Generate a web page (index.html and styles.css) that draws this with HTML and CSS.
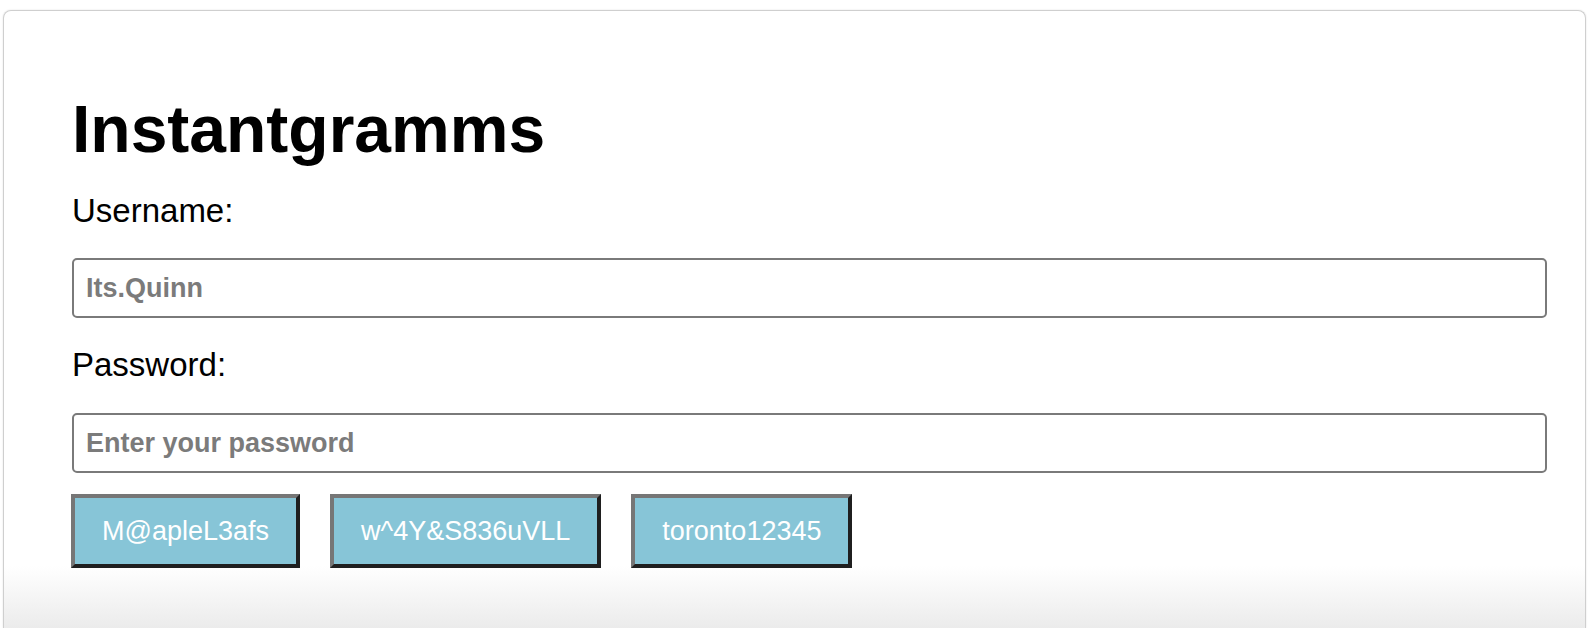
FILE: index.html
```html
<!DOCTYPE html>
<html lang="en">
<head>
<meta charset="utf-8">
<title>Instantgramms</title>
<link rel="stylesheet" href="styles.css">
</head>
<body>
<div class="card">
  <h1 class="title">Instantgramms</h1>
  <form class="form">
    <label class="label label-user" for="username">Username:</label>
    <input class="field field-user" id="username" type="text" placeholder="Its.Quinn">
    <label class="label label-pass" for="password">Password:</label>
    <input class="field field-pass" id="password" type="password" placeholder="Enter your password">
    <div class="suggestions">
      <button type="button" class="chip">M@apleL3afs</button>
      <button type="button" class="chip">w^4Y&amp;S836uVLL</button>
      <button type="button" class="chip">toronto12345</button>
    </div>
  </form>
</div>
</body>
</html>
```
FILE: styles.css
```css
html, body {
  margin: 0;
  padding: 0;
  background: #ffffff;
  overflow: hidden;
}

body {
  font-family: "Liberation Sans", Arial, sans-serif;
  color: #000;
}

.card {
  box-sizing: border-box;
  margin: 10px 8px 0 3px;
  height: 618px;
  padding: 80px 38px 0 67px;
  border: 1px solid #cfcfcf;
  border-bottom: 0;
  border-radius: 8px 8px 0 0;
  box-shadow: 0 0 2px rgba(0, 0, 0, 0.12);
  background: linear-gradient(to bottom, #ffffff 0, #ffffff 555px, #ebebeb 618px);
}

.title {
  margin: 0 0 0 1px;
  font-size: 66px;
  line-height: 76px;
  font-weight: bold;
}

.form {
  display: flex;
  flex-direction: column;
  padding-left: 1px;
}

.label {
  display: block;
  font-size: 33px;
  line-height: 38px;
}

.label-user {
  margin-top: 25px;
}

.label-pass {
  margin-top: 28px;
}

.field {
  box-sizing: border-box;
  height: 60px;
  width: 100%;
  padding: 0 12px;
  border: 2px solid #7a7a7a;
  border-radius: 5px;
  font-family: "Liberation Sans", Arial, sans-serif;
  font-size: 27px;
  font-weight: bold;
  color: #333;
  background: #fff;
}

.field::placeholder {
  color: #7b7b7b;
  opacity: 1;
}

.field-user {
  margin-top: 28px;
}

.field-pass {
  margin-top: 29px;
}

.suggestions {
  display: flex;
  gap: 30px;
  margin-top: 21px;
  margin-left: -1px;
}

.chip {
  box-sizing: border-box;
  height: 74px;
  padding: 0 27px;
  border-style: solid;
  border-width: 4px;
  border-color: #767676 #1f1f1f #1f1f1f #767676;
  background: #87c5d7;
  color: #ffffff;
  font-family: "Liberation Sans", Arial, sans-serif;
  font-size: 27px;
  cursor: pointer;
}
```
